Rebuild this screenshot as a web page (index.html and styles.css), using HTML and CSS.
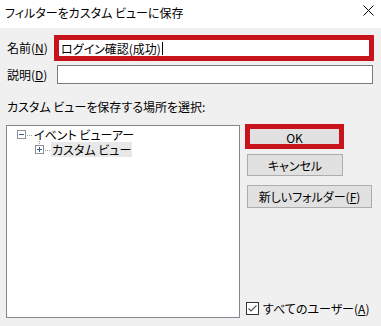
FILE: index.html
```html
<!DOCTYPE html>
<html lang="ja">
<head>
    <meta charset="UTF-8">
    <title>フィルターをカスタム ビューに保存</title>
    <link rel="stylesheet" href="styles.css">
</head>
<body>
    <div class="window">
        <div class="titlebar">
            <span class="title">フィルターをカスタム ビューに保存</span>
            <svg class="close" width="11" height="11" viewBox="0 0 11 11">
                <path d="M0.5 0.5 L10.5 10.5 M10.5 0.5 L0.5 10.5" stroke="#000" stroke-width="1" fill="none"/>
            </svg>
        </div>

        <div class="dialog">
            <div class="field-row first">
                <label class="field-label">名前(<u>N</u>)</label>
                <div class="highlight input-hl">
                    <div class="input-text">ログイン確認(成功)<span class="caret"></span></div>
                </div>
            </div>
            <div class="field-row second">
                <label class="field-label">説明(<u>D</u>)</label>
                <div class="input"></div>
            </div>

            <div class="section-label">カスタム ビューを保存する場所を選択:</div>

            <div class="main">
                <div class="tree">
                    <div class="tree-node root">
                        <svg class="expander" width="9" height="9" viewBox="0 0 9 9">
                            <rect x="0.5" y="0.5" width="8" height="8" fill="#fff" stroke="#919191"/>
                            <path d="M2 4.5 H7" stroke="#3b5b9a"/>
                        </svg>
                        <span class="dots"></span>
                        <span class="node-text">イベント ビューアー</span>
                    </div>
                    <div class="tree-node child">
                        <span class="vline"></span>
                        <svg class="expander" width="9" height="9" viewBox="0 0 9 9">
                            <rect x="0.5" y="0.5" width="8" height="8" fill="#fff" stroke="#919191"/>
                            <path d="M2 4.5 H7 M4.5 2 V7" stroke="#3b5b9a"/>
                        </svg>
                        <span class="dots"></span>
                        <span class="node-text selected">カスタム ビュー</span>
                    </div>
                </div>

                <div class="side">
                    <div class="highlight ok-hl">
                        <button class="btn ok">OK</button>
                    </div>
                    <button class="btn cancel">キャンセル</button>
                    <button class="btn new-folder">新しいフォルダー(<u>F</u>)</button>

                    <label class="check-row">
                        <svg class="checkbox" width="13" height="13" viewBox="0 0 13 13">
                            <rect x="0.5" y="0.5" width="12" height="12" fill="#fff" stroke="#333"/>
                            <path d="M2.5 6.5 L5 9 L10.5 3.5" stroke="#555" stroke-width="1.2" fill="none"/>
                        </svg>
                        <span>すべてのユーザー(<u>A</u>)</span>
                    </label>
                </div>
            </div>
        </div>
    </div>
</body>
</html>
```

FILE: styles.css
```css
:root {
    --bg: #f0f0f0;
    --red: #c8121c;
    --btn-bg: #e1e1e1;
    --btn-border: #adadad;
    --field-border: #7a7a7a;
}

* {
    margin: 0;
    padding: 0;
    box-sizing: border-box;
}

body {
    width: 381px;
    height: 326px;
    overflow: hidden;
    background: var(--bg);
    color: #000;
    font-family: "Noto Sans CJK JP", "Noto Sans", sans-serif;
    font-size: 12px;
    font-feature-settings: "palt";
    line-height: 1;
}

u {
    text-decoration: underline;
    text-underline-offset: 1px;
}

.titlebar {
    height: 28px;
    background: #fff;
    display: flex;
    align-items: center;
    justify-content: space-between;
    padding: 0 7px 3px 5px;
}

.title {
    font-size: 12px;
}

.close {
    margin-top: -5px;
}

.dialog {
    padding: 7px 0 0 0;
}

.field-row {
    display: flex;
    align-items: center;
}

.field-label {
    width: 54px;
    padding-left: 7px;
}

.field-row.second {
    margin-top: 4px;
}

.field-row.second .field-label {
    width: 57px;
}

.highlight {
    border: 5px solid var(--red);
}

.input-hl {
    width: 320px;
    height: 26px;
    background: #fff;
}

.input-text {
    padding: 1px 0 0 2px;
    display: flex;
    align-items: center;
    height: 100%;
}

.caret {
    display: inline-block;
    width: 1px;
    height: 13px;
    background: #000;
    margin-left: 1px;
}

.input {
    width: 316px;
    height: 19px;
    background: #fff;
    border: 1px solid var(--field-border);
}

.section-label {
    padding: 17px 0 0 7px;
    height: 41px;
}

.main {
    display: flex;
    padding-left: 6px;
}

.tree {
    width: 234px;
    height: 193px;
    background: #fff;
    border: 1px solid #82878f;
    padding-top: 1px;
}

.tree-node {
    display: flex;
    align-items: center;
    height: 15px;
    position: relative;
}

.tree-node.root {
    padding-left: 10px;
}

.tree-node.child {
    padding-left: 28px;
}

.expander {
    flex: none;
}

.dots {
    width: 5px;
    margin: 1px 1px 0 1px;
    border-top: 1px dotted #a0a0a0;
}

.node-text {
    padding: 1px 1px;
    height: 15px;
    display: flex;
    align-items: center;
}

.node-text.selected {
    background: #e8e8e8;
}

.vline {
    position: absolute;
    left: 32px;
    top: -3px;
    height: 5px;
    border-left: 1px dotted #a0a0a0;
}

.side {
    display: flex;
    flex-direction: column;
    align-items: flex-start;
    margin-left: 5px;
    height: 193px;
    margin-top: -1px;
}

.btn {
    font-family: inherit;
    font-size: 12px;
    font-feature-settings: "palt";
    background: var(--btn-bg);
    border: 1px solid var(--btn-border);
    color: #000;
}

.ok-hl {
    width: 99px;
    height: 25px;
}

.btn.ok {
    width: 100%;
    height: 100%;
    border: none;
}

.btn.cancel {
    width: 96px;
    height: 22px;
    margin: 5px 0 0 2px;
}

.btn.new-folder {
    width: 125px;
    height: 23px;
    margin: 9px 0 0 2px;
}

.check-row {
    margin-top: auto;
    margin-left: 1px;
    margin-bottom: 2px;
    display: flex;
    align-items: center;
    gap: 4px;
}
```
